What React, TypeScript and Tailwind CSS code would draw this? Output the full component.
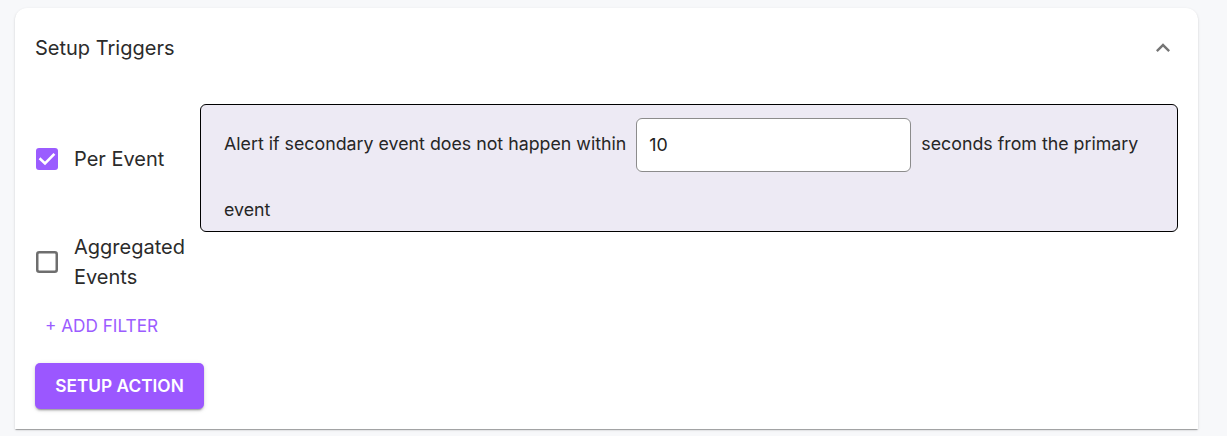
import React from "react";

const font = { fontFamily: "Inter, 'Noto Sans', sans-serif" };

function CheckedBox() {
  return (
    <svg width="22" height="22" viewBox="0 0 22 22" className="shrink-0">
      <rect x="0" y="0" width="22" height="22" rx="3" fill="#9b5cff" />
      <path d="M4.5 11.2 L9 15.5 L17.5 6.8" stroke="#fff" strokeWidth="2.6" fill="none" strokeLinecap="square" />
    </svg>
  );
}

function UncheckedBox() {
  return (
    <svg width="22" height="22" viewBox="0 0 22 22" className="shrink-0">
      <rect x="1.25" y="1.25" width="19.5" height="19.5" rx="2" fill="none" stroke="#6e6e6e" strokeWidth="2.5" />
    </svg>
  );
}

export default function App() {
  return (
    <div className="min-h-screen bg-[#f7f8fa] pl-[15px] pt-[8px]" style={font}>
      <div className="w-[1183px] h-[421px] bg-white rounded-t-[12px] shadow-[0_2px_1px_-1px_rgba(0,0,0,0.2),0_1px_1px_0_rgba(0,0,0,0.14),0_1px_3px_0_rgba(0,0,0,0.12)]">
        <div className="h-[80px] flex items-center justify-between pl-[20px] pr-[21px]">
          <span className="text-[20px] leading-[24px] text-[#2b2b2b]">Setup Triggers</span>
          <svg width="28" height="28" viewBox="0 0 24 24">
            <path d="M12 8l-6 6 1.41 1.41L12 10.83l4.59 4.58L18 14z" fill="#757575" />
          </svg>
        </div>
        <div className="px-[20px] pt-[16px]">
          <div className="flex items-start">
            <div className="w-[165px] shrink-0 pt-[40px]">
              <div className="flex items-center gap-[16px] pl-[1px]">
                <CheckedBox />
                <span className="text-[20px] leading-[30px] text-[#2b2b2b]">Per Event</span>
              </div>
            </div>
            <div className="flex-1 h-[128px] border border-black rounded-[6px] bg-[#edeaf4] pl-[23px] pr-[23px] pt-[6px] text-[17.8px] leading-[66px] text-[#262626]">
              Alert if secondary event does not happen within
              <input
                readOnly
                value="10"
                className="inline-block align-middle h-[54px] w-[275px] mx-[10px] px-[12px] bg-white border border-[#8c8c8c] rounded-[6px] text-[17.8px] text-[#222] outline-none"
                style={font}
              />
              seconds from the primary event
            </div>
          </div>
          <div className="flex items-center gap-[16px] pl-[1px]">
            <UncheckedBox />
            <span className="text-[20px] leading-[30px] text-[#2b2b2b] w-[115px]">Aggregated Events</span>
          </div>
          <div className="mt-[16px] h-[36px] flex items-center pl-[10px] text-[17.2px] text-[#9b5cff]">
            + ADD FILTER
          </div>
          <button className="mt-[19px] h-[46px] w-[169px] rounded-[5px] bg-[#9b57ff] text-white text-[17.3px] font-semibold shadow-[0_3px_1px_-2px_rgba(0,0,0,0.2),0_2px_2px_0_rgba(0,0,0,0.14),0_1px_5px_0_rgba(0,0,0,0.12)]" style={font}>
            SETUP ACTION
          </button>
        </div>
      </div>
    </div>
  );
}
